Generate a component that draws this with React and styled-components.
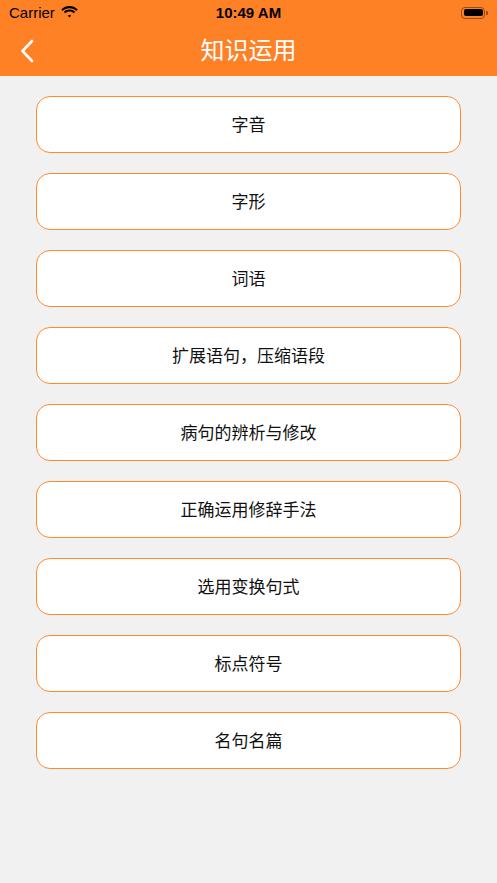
import React from "react";
import styled, { createGlobalStyle } from "styled-components";

const items = [
  "字音",
  "字形",
  "词语",
  "扩展语句，压缩语段",
  "病句的辨析与修改",
  "正确运用修辞手法",
  "选用变换句式",
  "标点符号",
  "名句名篇",
];

const GlobalStyle = createGlobalStyle`
  html, body {
    margin: 0;
    padding: 0;
    background: #f1f1f1;
  }
  body {
    font-family: "Liberation Sans", "Noto Sans CJK SC", sans-serif;
  }
`;

const App = () => {
  return (
    <Page>
      <GlobalStyle />
      <Header>
        <StatusBar>
          <Carrier>
            Carrier
            <svg width="19" height="14" viewBox="0 0 19 14">
              <path d="M9.5 3.2c2.6 0 5 1 6.8 2.7l1.4-1.5C15.5 2.3 12.6 1.1 9.5 1.1S3.5 2.3 1.3 4.4l1.4 1.5C4.5 4.2 6.9 3.2 9.5 3.2z" fill="#000" />
              <path d="M9.5 6.6c1.6 0 3.1.6 4.3 1.7l1.4-1.5C13.7 5.4 11.7 4.6 9.5 4.6S5.3 5.4 3.8 6.8l1.4 1.5c1.2-1.1 2.7-1.7 4.3-1.7z" fill="#000" />
              <path d="M9.5 9.9c.7 0 1.3.3 1.8.7L9.5 12.6 7.7 10.6c.5-.4 1.1-.7 1.8-.7z" fill="#000" />
            </svg>
          </Carrier>
          <Clock>10:49 AM</Clock>
          <Battery>
            <BatteryBody>
              <BatteryFill />
            </BatteryBody>
            <BatteryCap />
          </Battery>
        </StatusBar>
        <NavBar>
          <BackButton>
            <svg width="14" height="24" viewBox="0 0 14 24">
              <path d="M12 2 L2.5 12 L12 22" fill="none" stroke="#fff" strokeWidth="2.6" strokeLinecap="round" strokeLinejoin="round" />
            </svg>
          </BackButton>
          <Title>知识运用</Title>
        </NavBar>
      </Header>
      <List>
        {items.map((label) => (
          <ItemButton key={label}>{label}</ItemButton>
        ))}
      </List>
    </Page>
  );
};

export default App;

const Page = styled.div`
  min-height: 883px;
  background: #f1f1f1;
`;

const Header = styled.div`
  background: #ff8125;
  height: 76px;
  display: flex;
  flex-direction: column;
`;

const StatusBar = styled.div`
  height: 25px;
  display: grid;
  grid-template-columns: 1fr auto 1fr;
  align-items: center;
  padding: 0 9px 0 9px;
`;

const Carrier = styled.div`
  display: flex;
  align-items: center;
  gap: 5px;
  font-size: 15px;
  color: #000;
  svg {
    margin-top: -2px;
  }
`;

const Clock = styled.div`
  font-size: 15px;
  font-weight: bold;
  color: #000;
`;

const Battery = styled.div`
  justify-self: end;
  display: flex;
  align-items: center;
`;

const BatteryBody = styled.div`
  width: 24px;
  height: 12px;
  border: 1px solid #9a4f12;
  border-radius: 4px;
  padding: 1.5px;
  box-sizing: border-box;
  display: flex;
`;

const BatteryFill = styled.div`
  flex: 1;
  background: #000;
  border-radius: 2px;
`;

const BatteryCap = styled.div`
  width: 2px;
  height: 4px;
  background: #9a4f12;
  border-radius: 0 1px 1px 0;
  margin-left: 1px;
`;

const NavBar = styled.div`
  flex: 1;
  position: relative;
  display: flex;
  align-items: center;
  justify-content: center;
`;

const BackButton = styled.div`
  position: absolute;
  left: 20px;
  top: 50%;
  transform: translateY(-50%);
  display: flex;
`;

const Title = styled.div`
  color: #fff;
  font-size: 24px;
  line-height: 1;
  font-family: "Noto Sans CJK SC", sans-serif;
  padding-bottom: 4px;
`;

const List = styled.div`
  display: flex;
  flex-direction: column;
  gap: 20px;
  padding: 20px 36px 0 36px;
`;

const ItemButton = styled.div`
  height: 57px;
  box-sizing: border-box;
  background: #fff;
  border: 1px solid #ff8a30;
  border-radius: 14px;
  display: flex;
  align-items: center;
  justify-content: center;
  font-size: 17px;
  line-height: 1;
  padding-bottom: 2px;
  color: #111;
  font-family: "Noto Sans CJK SC", sans-serif;
`;
